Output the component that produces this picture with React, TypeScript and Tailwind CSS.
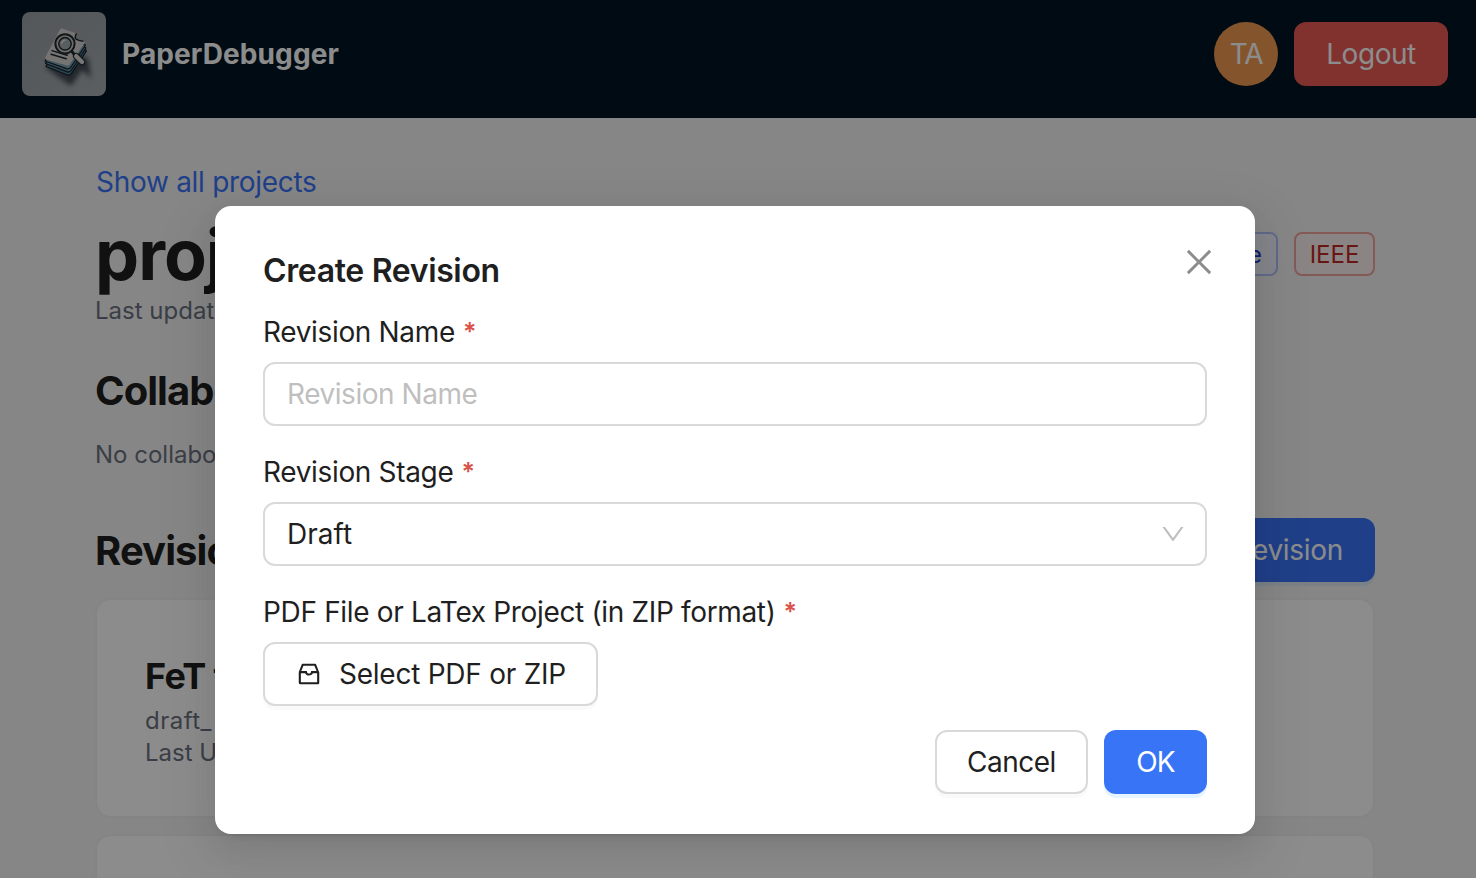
import type { ReactNode } from "react";
import { AiOutlineClose, AiOutlineDown, AiOutlineInbox } from "react-icons/ai";

function Logo() {
  return (
    <svg viewBox="0 0 84 84" className="size-[84px] rounded-lg">
      <defs>
        <linearGradient id="plate" x1="0" y1="0" x2="1" y2="1">
          <stop offset="0" stopColor="#98a0a4" />
          <stop offset="0.5" stopColor="#9ea5a9" />
          <stop offset="1" stopColor="#a9adaf" />
        </linearGradient>
        <filter id="soft" x="-30%" y="-30%" width="160%" height="160%">
          <feGaussianBlur stdDeviation="2.6" />
        </filter>
      </defs>
      <rect width="84" height="84" fill="url(#plate)" />
      <path d="M24 56 L49 74 L60 58 L69 66 L66 46 L40 40 Z" fill="#26333d" opacity="0.8" filter="url(#soft)" />
      <g strokeLinejoin="round">
        <path d="M24 54.5 L45.5 63 Q48 64 49.5 61.5 L64.5 39 L40 24 Z" fill="#4b7a91" stroke="#17222b" strokeWidth="1.3" />
        <path d="M23.5 51.5 L45.5 59.8 Q48 60.6 49.5 58 L64 36 L40 22 Z" fill="#5f8fa5" stroke="#17222b" strokeWidth="1.3" />
        <path d="M23 49 L45 56.8 Q47.5 57.5 49 55 L63.5 33 L40 20 Z" fill="#7ba3b3" stroke="#17222b" strokeWidth="1.3" />
        <path d="M38 17.4 Q39 16.2 40.8 16.8 L54.6 21.5 L53.6 26.8 L61.5 28.8 Q63.4 29.4 62.4 31.2 L47.6 52.6 Q46.6 54 45 53.5 L24.2 47.6 Q22.4 47 23.3 45.2 Z" fill="#d6d4d0" />
        <path d="M54.6 21.5 Q51.8 25.8 54.6 27.4 T61.5 29.3" fill="none" stroke="#1e272d" strokeWidth="1.5" />
      </g>
      <g fill="none" stroke="#20292f" strokeLinecap="round">
        <path d="M30 38.6 L45.2 43.2 M29 42.2 L44.2 46.8" strokeWidth="1.5" />
        <circle cx="43" cy="31.8" r="9.6" strokeWidth="2" fill="#c5c6c4" />
        <circle cx="43" cy="31.8" r="6.2" strokeWidth="1.5" fill="#a3abae" />
        <path d="M39.6 31.2 Q40.4 28.6 43 28.2" stroke="#edf0ef" strokeWidth="1.2" />
        <path d="M50 39.6 L53.2 43.6" strokeWidth="3" />
        <path d="M54.2 44.2 L60 50" strokeWidth="6.6" />
        <path d="M54.2 44.2 L60 50" stroke="#dad9d5" strokeWidth="4.4" />
      </g>
    </svg>
  );
}

function Header() {
  return (
    <header className="flex h-[118px] items-start justify-between bg-[#001423] pl-[22px] pr-7 pt-3">
      <div className="flex items-center gap-4">
        <Logo />
        <span className="text-[28px] font-bold leading-[44px] tracking-[0.1px] text-white">PaperDebugger</span>
      </div>
      <div className="mt-2.5 flex items-center gap-4">
        <div className="flex size-16 items-center justify-center rounded-full bg-[#f09b52] text-[28px] tracking-[-1.2px] text-white">
          TA
        </div>
        <button className="h-16 w-[154px] rounded-xl bg-[#ec5a55] text-[28px] tracking-[-0.45px] text-white">
          Logout
        </button>
      </div>
    </header>
  );
}

function RevisionCard({ children }: { children?: ReactNode }) {
  return (
    <article className="h-[220px] shrink-0 rounded-2xl border-2 border-[#f0f0f0] bg-white px-12 pt-[54px]">
      {children}
    </article>
  );
}

function ProjectPage() {
  return (
    <main className="flex h-[760px] flex-col overflow-hidden bg-[#f5f5f5] pl-[95px] pr-[101px] pt-[42px]">
      <a className="ml-px h-11 text-[28px] leading-[44px] tracking-[-0.29px] text-[#3974f7]">Show all projects</a>
      <div className="mt-[7px] flex justify-between">
        <h1 className="text-[70px] font-bold leading-[88px] tracking-[-1px] text-[#1f1f1f]">project</h1>
        <div className="mt-[21px] flex gap-4">
          <span className="h-11 rounded-lg border-2 border-[#b0bff8] bg-[#f0f5ff] px-3.5 pt-px text-2xl leading-10 text-[#2539bd]">
            Science
          </span>
          <span className="h-11 w-[81px] rounded-lg border-2 border-[#f0a49e] bg-[#fdf1f0] pt-px text-center text-2xl leading-10 text-[#be2823]">
            IEEE
          </span>
        </div>
      </div>
      <p className="-mt-1 text-2xl leading-8 text-[#6b7280]">Last updated</p>
      <h2 className="mt-10 text-[40px] font-bold leading-[48px] tracking-[-0.95px] text-[#1f1f1f]">Collaborators</h2>
      <p className="mt-6 text-2xl leading-8 text-[#6b7280]">No collaborators</p>
      <div className="mt-[47px] flex items-center justify-between">
        <h2 className="pt-0.5 text-[40px] font-bold leading-[48px] tracking-[-0.9px] text-[#1f1f1f]">Revisions</h2>
        <button className="h-16 rounded-xl bg-[#3974f7] px-8 text-[28px] tracking-[-0.3px] text-white shadow-[0_4px_0_rgba(5,145,255,0.1)]">
          Create Revision
        </button>
      </div>
      <div className="mt-4 flex flex-col gap-4">
        <RevisionCard>
          <h3 className="text-[36px] font-bold leading-[44px] tracking-[-0.7px] text-[#1f1f1f]">FeT test</h3>
          <p className="mt-[7px] text-2xl leading-8 tracking-[0.5px] text-[#6b7280]">draft_</p>
          <p className="text-2xl leading-8 text-[#6b7280]">Last Updated</p>
        </RevisionCard>
        <RevisionCard />
      </div>
    </main>
  );
}

function Label({ children }: { children: ReactNode }) {
  return (
    <div className="flex h-11 items-center text-[28px] leading-[44px] tracking-[-0.34px] text-[#1f1f1f]">
      {children}
      <span className="ml-2 text-[25px] font-semibold text-[#d9534b]">*</span>
    </div>
  );
}

function CreateRevisionModal() {
  return (
    <section
      role="dialog"
      className="absolute left-[215px] top-[206px] flex h-[628px] w-[1040px] flex-col rounded-2xl bg-white px-12 pt-10 shadow-[0_12px_32px_0_rgba(0,0,0,0.08),0_6px_12px_-8px_rgba(0,0,0,0.12),0_18px_56px_16px_rgba(0,0,0,0.05)]"
    >
      <div className="flex h-12 justify-between">
        <h2 className="text-[32px] font-semibold leading-[50px] tracking-[-0.36px] text-[#1f1f1f]">Create Revision</h2>
        <button className="-mr-2.5 flex h-8 w-9 items-center justify-center text-[36px] text-[#8c8c8c]">
          <AiOutlineClose />
        </button>
      </div>
      <div className="mt-4">
        <Label>Revision Name</Label>
        <input
          placeholder="Revision Name"
          className="mt-2 block h-16 w-full rounded-xl border-2 border-[#d9d9d9] px-[22px] text-[28px] tracking-[-0.45px] placeholder:text-[#bfbfbf]"
        />
      </div>
      <div className="mt-6">
        <Label>Revision Stage</Label>
        <div className="mt-2 flex h-16 items-center justify-between rounded-xl border-2 border-[#d9d9d9] pl-[22px] pr-[18px] text-[28px] text-[#1f1f1f]">
          Draft
          <AiOutlineDown className="size-7 text-[#bfbfbf]" />
        </div>
      </div>
      <div className="mt-6">
        <Label>PDF File or LaTex Project (in ZIP format)</Label>
        <button className="mt-2 flex h-16 w-[335px] items-center gap-4 rounded-xl border-2 border-[#d9d9d9] bg-white pl-[30px] text-[28px] tracking-[-0.25px] text-[#1f1f1f] shadow-[0_4px_0_rgba(0,0,0,0.02)]">
          <AiOutlineInbox className="size-7" />
          Select PDF or ZIP
        </button>
      </div>
      <div className="mt-6 flex justify-end gap-4">
        <button className="h-16 w-[153px] rounded-xl border-2 border-[#d9d9d9] bg-white text-[28px] tracking-[-0.5px] text-[#1f1f1f] shadow-[0_4px_0_rgba(0,0,0,0.02)]">
          Cancel
        </button>
        <button className="h-16 w-[103px] rounded-xl bg-[#3875f6] text-[28px] tracking-[-0.9px] text-white shadow-[0_4px_0_rgba(5,145,255,0.1)]">
          OK
        </button>
      </div>
    </section>
  );
}

export default function App() {
  return (
    <div className="relative h-[878px] w-[1476px] overflow-hidden font-['Inter',sans-serif]">
      <Header />
      <ProjectPage />
      <div className="absolute inset-0 bg-black/45" />
      <CreateRevisionModal />
    </div>
  );
}
